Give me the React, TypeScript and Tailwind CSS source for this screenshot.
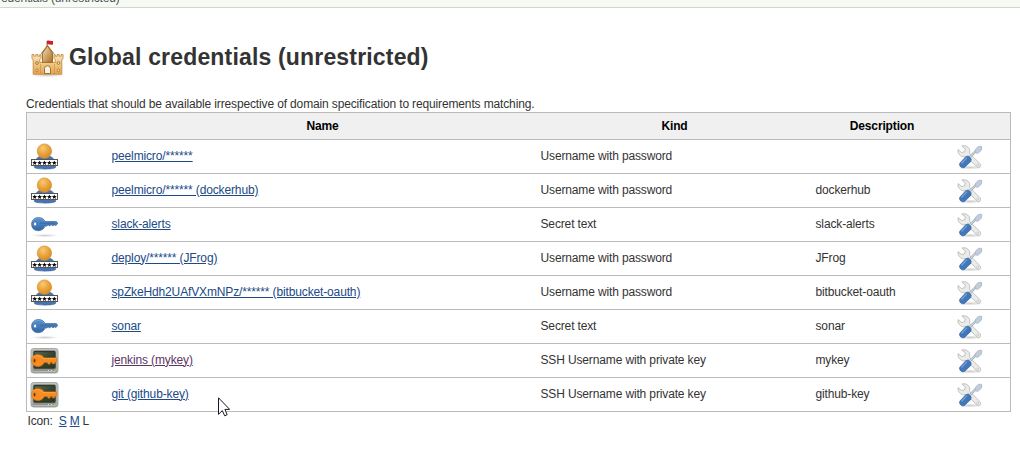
import React from "react";

type Kind = "user" | "key" | "ssh";

interface Credential {
  icon: Kind;
  name: string;
  kind: string;
  description: string;
  visited?: boolean;
}

const credentials: Credential[] = [
  { icon: "user", name: "peelmicro/******", kind: "Username with password", description: "" },
  { icon: "user", name: "peelmicro/****** (dockerhub)", kind: "Username with password", description: "dockerhub" },
  { icon: "key", name: "slack-alerts", kind: "Secret text", description: "slack-alerts" },
  { icon: "user", name: "deploy/****** (JFrog)", kind: "Username with password", description: "JFrog" },
  { icon: "user", name: "spZkeHdh2UAfVXmNPz/****** (bitbucket-oauth)", kind: "Username with password", description: "bitbucket-oauth" },
  { icon: "key", name: "sonar", kind: "Secret text", description: "sonar" },
  { icon: "ssh", name: "jenkins (mykey)", kind: "SSH Username with private key", description: "mykey", visited: true },
  { icon: "ssh", name: "git (github-key)", kind: "SSH Username with private key", description: "github-key" },
];

function Gradients() {
  return (
    <svg className="absolute size-0" aria-hidden="true">
      <defs>
        <linearGradient id="sand" x1="0" y1="0" x2="0" y2="1">
          <stop offset="0" stopColor="#fae6bd" />
          <stop offset="1" stopColor="#e3a54c" />
        </linearGradient>
        <linearGradient id="tower" x1="0" y1="0" x2="1" y2="1">
          <stop offset="0" stopColor="#f3dfba" />
          <stop offset="1" stopColor="#a96e24" />
        </linearGradient>
        <radialGradient id="head" cx="0.4" cy="0.3" r="0.7">
          <stop offset="0" stopColor="#f8ca78" />
          <stop offset="0.55" stopColor="#eaa53b" />
          <stop offset="1" stopColor="#d68c28" />
        </radialGradient>
        <linearGradient id="blue" x1="0" y1="0" x2="0" y2="1">
          <stop offset="0" stopColor="#5b93cf" />
          <stop offset="1" stopColor="#3465a4" />
        </linearGradient>
        <linearGradient id="frame" x1="0" y1="0" x2="0" y2="1">
          <stop offset="0" stopColor="#b4b6b1" />
          <stop offset="1" stopColor="#8c8f89" />
        </linearGradient>
        <linearGradient id="screen" x1="0" y1="0" x2="1" y2="1">
          <stop offset="0" stopColor="#5f7052" />
          <stop offset="0.5" stopColor="#37472f" />
          <stop offset="1" stopColor="#2a3725" />
        </linearGradient>
        <radialGradient id="shade">
          <stop offset="0" stopColor="#000" stopOpacity="0.2" />
          <stop offset="1" stopColor="#000" stopOpacity="0" />
        </radialGradient>
      </defs>
    </svg>
  );
}

function Castle() {
  return (
    <svg className="ml-[2px] h-10 w-[38px] shrink-0" viewBox="0 0 38 40" aria-hidden="true">
      <ellipse cx="19.5" cy="37" rx="18" ry="2.5" fill="url(#shade)" />
      <path d="M19 3v7" stroke="#898079" />
      <path d="M19 2.8c2-1 3.6.8 6 .1v3.5c-2.4.8-4-.8-6 0Z" fill="#d41e2c" />
      <path d="M4 16.5h1.8v1.7h2v-1.7h2v1.7h2v-1.7H13v3.8l-1.2 1.2v3h15.4v-3L26 20.3v-3.8h1.2v1.7h2v-1.7h2v1.7h2v-1.7H35v3.8l-1.2 1.7v14.2H5.2V22L4 20.3Z" fill="url(#sand)" stroke="#c38a3c" strokeWidth=".9" />
      <path d="M19.5 8 24.5 15v9.3h-10V15Z" fill="url(#tower)" stroke="#9b681f" strokeWidth=".9" />
      <path d="m13.4 15.6 6.1-7.9 6.1 7.9" fill="none" stroke="#aa742b" strokeWidth="1.1" />
      <path d="M12.5 26v10M26.5 26v10" stroke="#c48838" opacity=".5" />
      <path d="M16.5 35.5v-4.8a3 3 0 0 1 6 0v4.8Z" fill="#f5f5ee" stroke="#a96e25" />
      <circle cx="9" cy="25" r="1.4" fill="#ffdfa0" stroke="#96601f" strokeWidth=".8" />
      <circle cx="30.5" cy="25" r="1.4" fill="#ffdfa0" stroke="#96601f" strokeWidth=".8" />
      <rect x="7.8" y="31" width="2.2" height="2.8" rx="1" fill="#ffdfa0" stroke="#a76e25" strokeWidth=".8" />
      <rect x="29.3" y="31" width="2.2" height="2.8" rx="1" fill="#ffdfa0" stroke="#a76e25" strokeWidth=".8" />
    </svg>
  );
}

function UserIcon() {
  return (
    <svg className="h-8 w-8" viewBox="0 0 32 32" aria-hidden="true">
      <path d="M6.4 26.5C5.3 21 8 16 13 15h8c5 1 7.5 6 6.6 11.5-2 2.2-19.2 2.2-21.2 0Z" fill="#4773b0" stroke="#3a659e" strokeWidth=".5" />
      <circle cx="16.4" cy="10.1" r="7.2" fill="url(#head)" stroke="#d99335" strokeWidth=".7" />
      <rect x="3.5" y="18.5" width="26" height="6" fill="#fff" stroke="#555" strokeWidth="1" />
      <g fill="#111">
        {[6.7, 11.6, 16.5, 21.4, 26.3].map((x) => (
          <path key={x} transform={`translate(${x} 21.8)`} d="m0-2.4.7 1.6 1.8.1L1.1.5l.5 1.8L0 1.3l-1.6 1 .5-1.8L-2.5-.7l1.8-.1Z" />
        ))}
      </g>
    </svg>
  );
}

function KeyIcon() {
  return (
    <svg className="h-8 w-8" viewBox="0 0 32 32" aria-hidden="true">
      <ellipse cx="17" cy="26.5" rx="14" ry="1.6" fill="url(#shade)" />
      <path fillRule="evenodd" d="M10.5 8.5c3.4 0 5.5 1.6 6.6 4h11.1l1.6 1.6-1.7 2.3-1.5-.5-1.6.8-1.7-1-1.7 1.2-1.4-.8-1.9 1h-1.2c-1.2 3-3.7 4.6-6.7 4.6-4.3 0-6.8-2.8-6.8-6.5C3.6 11.4 6.3 8.5 10.5 8.5ZM7.1 12.9c-1.6 0-2.2 3.8 0 4 2 .1 2-4 0-4Z" fill="url(#blue)" stroke="#3a6ba8" strokeWidth=".7" />
      <path d="M12 14.2h15" stroke="#356399" strokeWidth=".7" />
      <path d="M5 12.5c1-2.3 3-3.1 5.4-3.1 2.9 0 4.6 1.3 5.8 3" fill="none" stroke="#81addd" strokeWidth=".6" />
    </svg>
  );
}

function SshIcon() {
  return (
    <svg className="h-8 w-8" viewBox="0 0 32 32" aria-hidden="true">
      <rect x="3" y="3.5" width="27" height="24.5" rx="2.5" fill="url(#frame)" stroke="#a8aaa6" />
      <rect x="4" y="4.5" width="25" height="22" rx="1.5" fill="none" stroke="#c4c6c1" strokeWidth=".8" />
      <rect x="6" y="6.5" width="21" height="16.5" rx="1" fill="url(#screen)" stroke="#30372c" strokeWidth="1.3" />
      <path d="M20 25.5h1m2 0h1" stroke="#dcdfd9" />
      <path d="M27 24.7v1.6" stroke="#a5df4d" strokeWidth="1.3" />
      <path fillRule="evenodd" d="M10 9.8c3 0 5 1.2 6 3.1h12.7v4.3h-2.1v1.5h-2.3v-1.4h-2.2v1.8h-2.2v-1.7h-3.7c-1.1 2.5-3.4 4-6.3 4-3.9 0-6.5-2.4-6.5-5.8 0-3.4 2.6-5.8 6.6-5.8ZM6.5 13.8c-1.5 0-1.7 3.6.1 3.7 1.7 0 1.7-3.7-.1-3.7Z" fill="#fa8b20" stroke="#e57b17" strokeWidth=".7" />
      <path d="M5 12c2-1.7 7.2-2.4 10 1.6h12.7" fill="none" stroke="#ffaf55" strokeWidth=".7" />
    </svg>
  );
}

function Tools() {
  return (
    <svg className="h-8 w-8" viewBox="0 0 32 32" aria-hidden="true">
      <ellipse cx="16" cy="26.5" rx="13" ry="2.1" fill="url(#shade)" />
      <path d="M7.8 5.1c2.7-1 6 .1 7.3 2.5.9 1.7.8 3.2.3 4.7l10.4 10.1c2.2 2.3-.5 5.5-3 3.6L12.3 15.5c-3.2 1-6.9-.6-8-3.8-.4-1.2-.3-2.3-.2-3.1l3.5 2.9 3-.7.8-2.9Z" fill="#ebecea" stroke="#b9bbb8" strokeWidth=".9" />
      <circle cx="23.8" cy="24" r="1" fill="#fff" stroke="#b1b4b0" strokeWidth=".6" />
      <path d="m15.2 16.7 7.8-7.9" stroke="#a4afba" strokeWidth="2.5" />
      <path d="m15.5 16.2 7.4-7.6" stroke="#e1e8ef" strokeWidth="1" />
      <path d="m21.4 8.6 2.5-2.9 3.2-.7.8.9-.5 3.3-3.2 2.9-1.8.2-1.2-1.3Z" fill="#c1cddb" stroke="#9eb0c4" strokeWidth=".7" />
      <path d="m14.2 14.9 3 2.9-.4 2.6-6 5.9c-2.5 1.8-6.3-1.3-5-4.1l6-6.5Z" fill="#4277b8" stroke="#3466a8" strokeWidth=".7" />
      <path d="m7.5 22.5 5.5-5.8" stroke="#78a5d8" strokeWidth="1.2" />
    </svg>
  );
}

function CredentialIcon({ type }: { type: Kind }) {
  if (type === "user") return <UserIcon />;
  if (type === "key") return <KeyIcon />;
  return <SshIcon />;
}

export default function App() {
  return (
    <div className="relative h-[472px] w-[1020px] overflow-hidden bg-white font-['Liberation_Sans',Arial,sans-serif] text-xs leading-4 tracking-[-0.14px] text-[#333]">
      <Gradients />
      <header className="flex h-2 items-end overflow-hidden border-b border-[#d3d7cf] bg-[#f6faf2] pl-px">
        <span className="mb-[2px] leading-[14px] text-[#4d545d]">edentials (unrestricted)</span>
      </header>
      <main className="w-[1011px] pl-[26px] pt-[30px]">
        <div className="flex h-10 items-center gap-[3px]">
          <Castle />
          <h1 className="mb-[2px] whitespace-nowrap text-[23px] font-bold leading-8 tracking-[0.17px]">Global credentials (unrestricted)</h1>
        </div>
        <p className="mt-[18px] h-4">Credentials that should be available irrespective of domain specification to requirements matching.</p>
        <table className="w-[984px] table-fixed border-collapse border border-[#bbb] text-left">
          <colgroup>
            <col className="w-[81px]" />
            <col className="w-[430px]" />
            <col className="w-[274px]" />
            <col className="w-[141px]" />
            <col className="w-[58px]" />
          </colgroup>
          <thead>
            <tr className="h-[27px] border-b border-[#bbb] bg-[#f0f0f0] text-center text-black">
              <th />
              <th className="p-0">Name</th>
              <th className="p-0">Kind</th>
              <th className="p-0">Description</th>
              <th />
            </tr>
          </thead>
          <tbody>
            {credentials.map((item) => (
              <tr key={item.name} className="h-[34px] border-b border-[#bbb]">
                <td className="p-0 pl-px"><CredentialIcon type={item.icon} /></td>
                <td className="p-0 pb-[2px] pl-1">
                  <a href="#" className={item.visited ? "text-[#5c3566] underline" : "text-[#204a87] underline"}>{item.name}</a>
                </td>
                <td className="p-0 pb-[2px] pl-[3px]">{item.kind}</td>
                <td className="p-0 pb-[2px] pl-1">{item.description}</td>
                <td className="p-0 pl-px"><Tools /></td>
              </tr>
            ))}
          </tbody>
        </table>
        <div className="mt-px flex pl-[1.5px]">
          <span className="mr-[6px]">Icon:</span>
          <a href="#" className="mr-[3px] text-[#204a87] underline">S</a>
          <a href="#" className="mr-[3px] text-[#204a87] underline">M</a>
          <span>L</span>
        </div>
      </main>
      <svg className="absolute left-[218px] top-[397px] h-5 w-3" viewBox="0 0 12 20" aria-hidden="true">
        <path d="M.5.8v16.5l3.8-3.7 2.4 5.2 2.5-1.1L6.9 12.4h4.8Z" fill="#fff" stroke="#171923" />
      </svg>
    </div>
  );
}
